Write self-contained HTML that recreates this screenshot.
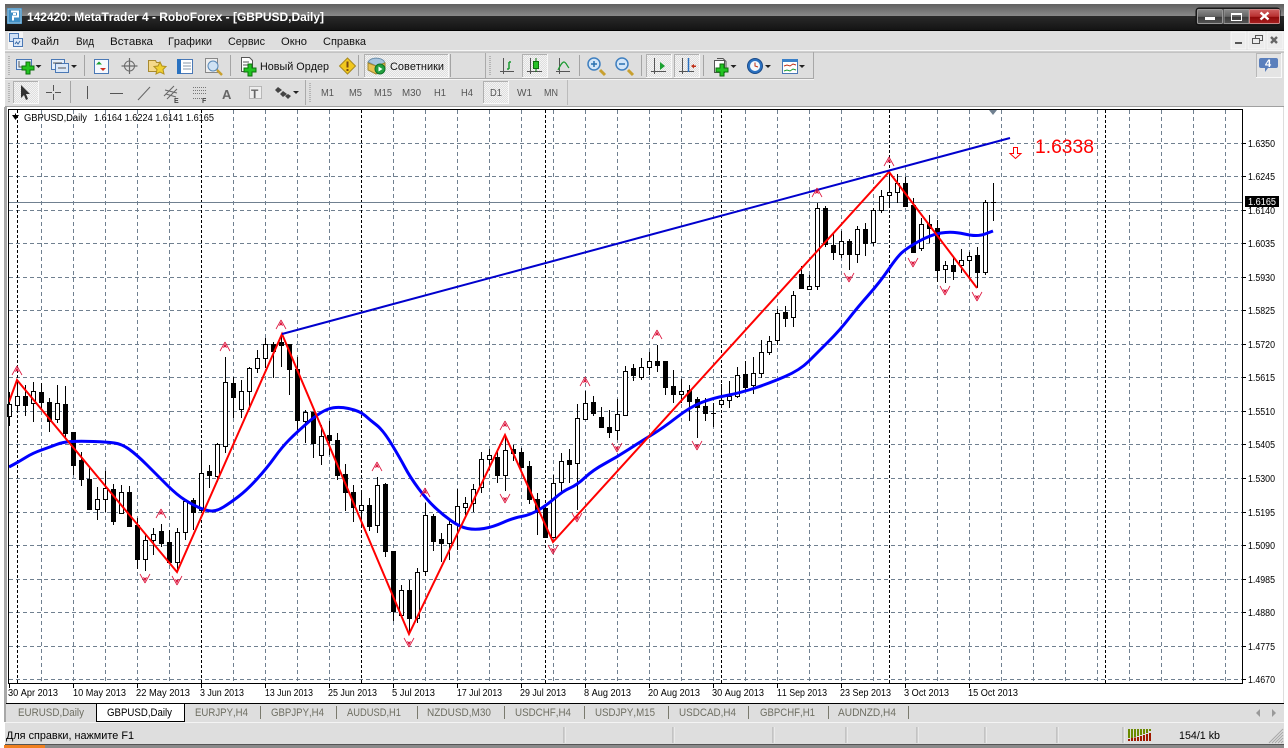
<!DOCTYPE html>
<html lang="ru"><head><meta charset="utf-8"><title>MetaTrader 4</title>
<style>
html,body{margin:0;padding:0;background:#fff;width:1288px;height:748px;overflow:hidden}
svg{display:block;font-family:"Liberation Sans",Arial,sans-serif}
text{font-kerning:none}
.m{font-size:11px;fill:#111}
.t{font-size:10px;fill:#555}
.d{font-size:10px;fill:#000}
.p{font-size:10px;fill:#000}
.b{font-size:11px;fill:#6e6e62}
</style></head><body>
<svg width="1288" height="748" viewBox="0 0 1288 748" xmlns="http://www.w3.org/2000/svg">
<defs>
<linearGradient id="g1" x1="0" y1="0" x2="0" y2="1"><stop offset="0" stop-color="#606060"/><stop offset="1" stop-color="#8a8a8a"/></linearGradient>
<linearGradient id="g2" x1="0" y1="0" x2="0" y2="1"><stop offset="0" stop-color="#2a2a2a"/><stop offset="1" stop-color="#141414"/></linearGradient>
<linearGradient id="gb" x1="0" y1="0" x2="0" y2="1"><stop offset="0" stop-color="#8a8a8a"/><stop offset=".5" stop-color="#666"/><stop offset=".55" stop-color="#3c3c3c"/><stop offset="1" stop-color="#555"/></linearGradient>
<linearGradient id="gr" x1="0" y1="0" x2="0" y2="1"><stop offset="0" stop-color="#d06060"/><stop offset=".5" stop-color="#b83030"/><stop offset=".55" stop-color="#900a0a"/><stop offset="1" stop-color="#a82020"/></linearGradient>
<pattern id="dz" width="2" height="2" patternUnits="userSpaceOnUse"><rect width="2" height="2" fill="#dedede"/><rect width="1" height="1" fill="#f4f4f4"/><rect x="1" y="1" width="1" height="1" fill="#f4f4f4"/></pattern>
<path id="plus" d="M-2-6h4v4h4v4h-4v4h-4v-4h-4v-4h4z" fill="#22c422" stroke="#0c700c"/>
<g id="u" fill="#dc143c"><path d="M0-5L-5 4M0-5L5 4" stroke="#dc143c" stroke-width=".8" fill="none"/><path d="M0-3.500L-2.200 1L0 0L2.200 1z"/></g>
<g id="n" fill="#dc143c"><path d="M0 5L-5-4M0 5L5-4" stroke="#dc143c" stroke-width=".8" fill="none"/><path d="M0 3.500L-2.200-1L0 0L2.200-1z"/></g>
<path id="dr" d="M0 0h6l-3 3z" fill="#222"/>
</defs>

<!-- window chrome -->
<rect x="5" y="4" width="1279" height="12" fill="url(#g1)"/>
<rect x="5" y="16" width="1279" height="14" fill="url(#g2)"/>
<rect x="5" y="30" width="1279" height="1" fill="#000"/>
<rect x="5" y="31" width="1279" height="19" fill="#dedede"/>
<rect x="5" y="50" width="1279" height="2" fill="#f6f6f6"/>
<rect x="5" y="52" width="1279" height="54" fill="#dedede"/>
<rect x="5" y="51.500" width="1279" height="1" fill="#a8a8a8"/>
<path d="M5 78.500H813.500V52" fill="none" stroke="#a8a8a8"/>
<path d="M5 79.500H814" stroke="#f4f4f4"/>
<path d="M567.500 80V105" stroke="#bbb"/>
<path d="M305.500 80V105M485.500 53V78" stroke="#aaa"/>
<rect x="5" y="106" width="1279" height="1" fill="#a0a0a0"/>
<rect x="7" y="107" width="1276" height="596" fill="#fff"/>
<rect x="4" y="107" width="3" height="596" fill="#a8a8a8"/>
<rect x="1283" y="107" width="1" height="596" fill="#ddd"/>

<!-- title -->
<rect x="7" y="8" width="15" height="16" fill="#2c7fb8"/>
<rect x="8" y="9" width="13" height="14" fill="#3f8fc5" stroke="#9cc6e0"/>
<path d="M11 11.500h7v5h-5v4M13 14h3" fill="none" stroke="#fff" stroke-width="2"/>
<text x="27" y="21" font-size="12" font-weight="bold" fill="#fff" textLength="297" lengthAdjust="spacingAndGlyphs">142420: MetaTrader 4 - RoboForex - [GBPUSD,Daily]</text>
<rect x="1196" y="8" width="84" height="17" rx="3" fill="#222" stroke="#111"/>
<rect x="1197.500" y="9.500" width="25" height="14" rx="1" fill="url(#gb)" stroke="#999"/>
<rect x="1224" y="9.500" width="25" height="14" fill="url(#gb)" stroke="#999"/>
<rect x="1249.500" y="9.500" width="30" height="14" rx="1" fill="url(#gr)" stroke="#c88"/>
<rect x="1205" y="17" width="10" height="3" fill="#fff"/>
<rect x="1231.500" y="13.500" width="10" height="7" fill="none" stroke="#fff"/><rect x="1231" y="13" width="11" height="2" fill="#fff"/>
<path d="M1260.500 12.500l8 7M1268.500 12.500l-8 7" stroke="#fff" stroke-width="2.400"/>

<!-- menu -->
<rect x="8" y="32" width="15" height="17" fill="#f4f4f4"/>
<rect x="9.500" y="33.500" width="9" height="8" fill="#cfe0f5" stroke="#4a78b5"/>
<rect x="13.500" y="38.500" width="9" height="8" fill="#dde9f8" stroke="#4a78b5"/>
<path d="M15 44l1.500-2 1.500 2 2-3" stroke="#3a6aa5" fill="none"/>
<text class="m" x="31" y="45" textLength="28" lengthAdjust="spacingAndGlyphs">Файл</text>
<text class="m" x="76" y="45" textLength="18" lengthAdjust="spacingAndGlyphs">Вид</text>
<text class="m" x="110" y="45" textLength="43" lengthAdjust="spacingAndGlyphs">Вставка</text>
<text class="m" x="168" y="45" textLength="44" lengthAdjust="spacingAndGlyphs">Графики</text>
<text class="m" x="228" y="45" textLength="37" lengthAdjust="spacingAndGlyphs">Сервис</text>
<text class="m" x="281" y="45" textLength="26" lengthAdjust="spacingAndGlyphs">Окно</text>
<text class="m" x="323" y="45" textLength="43" lengthAdjust="spacingAndGlyphs">Справка</text>
<rect x="1231" y="32" width="15" height="17" fill="#ececec" stroke="#f8f8f8"/>
<rect x="1248" y="32" width="17" height="17" fill="#ececec" stroke="#f8f8f8"/>
<rect x="1267" y="32" width="16" height="17" fill="#ececec" stroke="#f8f8f8"/>
<rect x="1235" y="42" width="7" height="2" fill="#555"/>
<path d="M1252.500 38.500h7v5h-7zM1255.500 38v-2.500h7v5h-3" fill="none" stroke="#555"/><path d="M1252 38.500h8M1255 35.500h8" stroke="#555"/>
<path d="M1271 37l6 6M1277 37l-6 6" stroke="#666" stroke-width="2.400"/>

<!-- toolbar 1 -->
<path d="M8.500 56V76M9.500 56V76M489.500 56V76M490.500 56V76" stroke="#b4b4b4" stroke-dasharray="1 1"/>
<g><rect x="16.500" y="59.500" width="15" height="10" fill="#e4eefa" stroke="#4a78b5"/><path d="M19 61v6h8" stroke="#555" fill="none"/><use href="#plus" x="28" y="68"/><use href="#dr" x="35.500" y="65"/></g>
<g><rect x="51.500" y="59.500" width="13" height="10" fill="#e4eefa" stroke="#4a78b5"/><rect x="55.500" y="63.500" width="13" height="9" fill="#dbe8f8" stroke="#4a78b5"/><path d="M53 63h9M58 68h8" stroke="#555"/><use href="#dr" x="71" y="65"/></g>
<path d="M84.500 55V76M230.500 55V76M358.500 55V76M450.500 54V77M579.500 55V76M641.500 55V76M703.500 55V76" stroke="#a4a4a4"/>
<g><rect x="94.500" y="59.500" width="14" height="14" fill="#f6f9fe" stroke="#4a78b5"/><path d="M103 71l3-3h-6z" fill="#d03020"/><path d="M99 61.500l3 3h-6z" fill="#1aa030"/></g>
<g fill="none" stroke="#6a6a6a"><circle cx="129.500" cy="66" r="5"/><path d="M129.500 58v16M121.500 66h16" stroke-width="1.200"/></g>
<g><path d="M148.500 60.500h7l1 2h3v9h-11z" fill="#f4d98a" stroke="#a88a30"/><path d="M160 62l2 4 4 .5-3 3 1 4.500-4-2-4 2 1-4.500-3-3 4-.5z" fill="#f0d030" stroke="#b09020"/></g>
<g><rect x="177.500" y="59.500" width="15" height="14" fill="#fff" stroke="#4a78b5"/><rect x="177" y="59" width="4" height="15" fill="#2a72c0"/><path d="M183 63h8M183 66h8M183 69h8" stroke="#89a"/></g>
<g><rect x="205.500" y="58.500" width="12" height="14" fill="#eee" stroke="#888"/><circle cx="213" cy="66" r="5" fill="#cfe2f4" stroke="#5a8ab8"/><path d="M217 70l5 5" stroke="#c8a030" stroke-width="2.500"/></g>
<g><path d="M241.500 57.500h8l3 3v11h-11z" fill="#fff" stroke="#555"/><path d="M243 62h6M243 65h7" stroke="#555"/><use href="#plus" x="250" y="70"/></g>
<text class="m" x="260" y="70" textLength="69" lengthAdjust="spacingAndGlyphs">Новый Ордер</text>
<g><path d="M347.500 58l8 8-8 8-8-8z" fill="#f2c81e" stroke="#a88a20"/><path d="M347.500 61.500v6" stroke="#7a4a10" stroke-width="2"/><rect x="346.500" y="69" width="2" height="2" fill="#7a4a10"/></g>
<rect x="364.500" y="54.500" width="84" height="23" fill="url(#dz)" stroke="#f8f8f8"/><path d="M364.500 77V54.500H448" fill="none" stroke="#b0b0b0"/>
<g><path d="M368 62c3-5 12-5 16-1l1 3-9 2z" fill="#a8c4de" stroke="#6a8ca8"/><path d="M368 63l8 3 9-3v6l-9 5-8-4z" fill="#e8c050" stroke="#a08830"/><circle cx="380" cy="69" r="5" fill="#22a040" stroke="#0f7028"/><path d="M378.500 66.500v5l4-2.500z" fill="#fff"/></g>
<text class="m" x="390" y="70" textLength="54" lengthAdjust="spacingAndGlyphs">Советники</text>
<g fill="none" stroke="#555"><path d="M503.500 58v16M500 71.500h14"/><path d="M509 62v7M509 62h2M507 69h2" stroke="#1a9a30" stroke-width="1.500"/></g>
<rect x="522.500" y="54.500" width="25" height="23" fill="url(#dz)" stroke="#f8f8f8"/><path d="M522.500 77V54.500H547" fill="none" stroke="#b0b0b0"/>
<g fill="none" stroke="#555"><path d="M530.500 58v16M527 71.500h15"/><rect x="533.500" y="61.500" width="5" height="7" fill="#26c026" stroke="#0c700c"/><path d="M536 58v3M536 69v3" stroke="#0c700c"/></g>
<g fill="none" stroke="#555"><path d="M559.500 58v16M556 71.500h14"/><path d="M558 70c2-4 4-8 6-8s3 4 5 6" stroke="#1a9a30" stroke-width="1.200"/></g>
<g><path d="M600 70l5 5" stroke="#c8a030" stroke-width="3"/><circle cx="594" cy="64" r="6" fill="#d4e6f8" stroke="#4080c0" stroke-width="1.500"/><path d="M591 64h6M594 61v6" stroke="#2a70b0" stroke-width="1.500"/></g>
<g><path d="M628 70l5 5" stroke="#c8a030" stroke-width="3"/><circle cx="622" cy="64" r="6" fill="#d4e6f8" stroke="#4080c0" stroke-width="1.500"/><path d="M619 64h6" stroke="#2a70b0" stroke-width="1.500"/></g>
<rect x="646.500" y="54.500" width="25" height="23" fill="url(#dz)" stroke="#f8f8f8"/><path d="M646.500 77V54.500H671" fill="none" stroke="#b0b0b0"/>
<g fill="none" stroke="#555"><path d="M654.500 58v16M651 71.500h15"/><path d="M660 62v8l5-4z" fill="#1aa030" stroke="none"/></g>
<rect x="674.500" y="54.500" width="25" height="23" fill="url(#dz)" stroke="#f8f8f8"/><path d="M674.500 77V54.500H699" fill="none" stroke="#b0b0b0"/>
<g fill="none" stroke="#555"><path d="M682.500 58v16M679 71.500h15"/><path d="M688.500 58v14" stroke="#2a70c0" stroke-width="1.500"/><path d="M691 66l3-2v1.500h2v1.500h-2v1.500z" fill="#c03018" stroke="none"/></g>
<g><rect x="714.500" y="60.500" width="10" height="12" fill="#fff" stroke="#555"/><path d="M717 58.500h6l3 3v6" fill="none" stroke="#555"/><use href="#plus" x="722" y="70"/><use href="#dr" x="730.500" y="65"/></g>
<g><circle cx="755" cy="66" r="7.500" fill="#2a70c0" stroke="#1a4a88"/><circle cx="755" cy="66" r="5" fill="#f4f8fc"/><path d="M755 62.500v3.500l3 1" stroke="#c03018" fill="none"/><use href="#dr" x="765" y="65"/></g>
<g><rect x="782.500" y="59.500" width="15" height="14" fill="#fff" stroke="#4a78b5"/><rect x="782" y="59" width="16" height="3" fill="#3a80c8"/><path d="M784 66l3-1 3 1 3-2 3 1" stroke="#c03018" fill="none"/><path d="M784 71l3-1 3 1 3-2 3 1" stroke="#1a9a30" fill="none"/><use href="#dr" x="799" y="65"/></g>
<rect x="1256.500" y="53.500" width="25" height="24" fill="#e4e4e4" stroke="#f8f8f8"/><path d="M1256.500 77V53.500H1281" fill="none" stroke="#b8b8b8"/>
<path d="M1261 58h15q2 0 2 2v6q0 2-2 2h-8l-3 4v-4h-4q-2 0-2-2v-6q0-2 2-2z" fill="#5a7fbc"/>
<text x="1265" y="67" font-size="11" font-weight="bold" fill="#fff">4</text>

<!-- toolbar 2 -->
<path d="M8.500 83V103M9.500 83V103M309.500 83V103M310.500 83V103" stroke="#b4b4b4" stroke-dasharray="1 1"/>
<rect x="13.500" y="81.500" width="25" height="22" fill="url(#dz)" stroke="#f8f8f8"/><path d="M13.500 103V81.500H38" fill="none" stroke="#b0b0b0"/>
<path d="M21 85v13l3-3 2 5 2-1-2-5h4z" fill="#333"/>
<path d="M53.500 85v6M53.500 94v6M46 92.500h6M55 92.500h6" stroke="#555"/>
<path d="M70.500 81V103" stroke="#a4a4a4"/>
<path d="M87.500 86v13" stroke="#555"/>
<path d="M110 93.500h13" stroke="#555"/>
<path d="M138 100l12-13" stroke="#666"/>
<g stroke="#666" fill="none"><path d="M164 96l10-10M167 99l10-10M165 90l12 3M166 94l10 3"/></g><text x="174" y="103" font-size="7" font-weight="bold" fill="#444">E</text>
<g stroke="#777" stroke-dasharray="1 1"><path d="M193 87.500h14M193 90.500h14M193 93.500h14M193 98.500h14"/></g><text x="202" y="103" font-size="7" font-weight="bold" fill="#444">F</text>
<text x="222" y="99" font-size="13" font-weight="bold" fill="#666">A</text>
<rect x="249.500" y="86.500" width="12" height="12" fill="#eee" stroke="#888" stroke-dasharray="1 1"/><text x="251" y="98" font-size="12" font-weight="bold" fill="#666">T</text>
<path d="M278 87l4 3-4 3-3-3zM283 91l4 3-4 3-3-3zM288 94l3 2-3 3-3-3z" fill="#444"/><use href="#dr" x="293" y="91"/>
<text class="t" x="321" y="96" textLength="13" lengthAdjust="spacingAndGlyphs">M1</text>
<text class="t" x="349" y="96" textLength="13" lengthAdjust="spacingAndGlyphs">M5</text>
<text class="t" x="374" y="96" textLength="18" lengthAdjust="spacingAndGlyphs">M15</text>
<text class="t" x="402" y="96" textLength="19" lengthAdjust="spacingAndGlyphs">M30</text>
<text class="t" x="434" y="96" textLength="12" lengthAdjust="spacingAndGlyphs">H1</text>
<text class="t" x="461" y="96" textLength="12" lengthAdjust="spacingAndGlyphs">H4</text>
<rect x="483.500" y="81.500" width="25" height="22" fill="url(#dz)" stroke="#f8f8f8"/><path d="M483.500 103V81.500H508" fill="none" stroke="#b0b0b0"/>
<text class="t" x="490" y="96" textLength="12" lengthAdjust="spacingAndGlyphs">D1</text>
<text class="t" x="517" y="96" textLength="15" lengthAdjust="spacingAndGlyphs">W1</text>
<text class="t" x="544" y="96" textLength="14" lengthAdjust="spacingAndGlyphs">MN</text>

<!-- chart grid -->
<g fill="none" stroke="#708090" stroke-dasharray="4 3">
<path d="M41.500 110V683M73.500 110V683M105.500 110V683M137.500 110V683M169.500 110V683M233.500 110V683M265.500 110V683M297.500 110V683M329.500 110V683M393.500 110V683M425.500 110V683M457.500 110V683M489.500 110V683M521.500 110V683M553.500 110V683M585.500 110V683M617.500 110V683M649.500 110V683M681.500 110V683M713.500 110V683M745.500 110V683M777.500 110V683M809.500 110V683M841.500 110V683M873.500 110V683M905.500 110V683M937.500 110V683M969.500 110V683M1001.500 110V683M1033.500 110V683M1065.500 110V683M1097.500 110V683M1129.500 110V683M1161.500 110V683M1193.500 110V683M1225.500 110V683"/>
<path d="M9 143.500H1243M9 176.500H1243M9 210.500H1243M9 243.500H1243M9 277.500H1243M9 310.500H1243M9 344.500H1243M9 377.500H1243M9 411.500H1243M9 444.500H1243M9 478.500H1243M9 512.500H1243M9 545.500H1243M9 579.500H1243M9 612.500H1243M9 646.500H1243M9 679.500H1243"/>
</g>
<path d="M17.500 110V683M201.500 110V683M361.500 110V683M545.500 110V683M721.500 110V683M889.500 110V683M1105.500 110V683" stroke="#000" stroke-dasharray="3 2" fill="none"/>
<path d="M9 202.500H1243" stroke="#708090"/>

<!-- candles -->
<g shape-rendering="crispEdges" stroke="#000">
<path fill="none" d="M9.500 392V426M17.500 380V411M25.500 385V416M33.500 382V422M41.500 383V410M49.500 398V432M57.500 385V423M65.500 386V437M73.500 432V475M81.500 452V486M89.500 468V509M97.500 487V520M105.500 471V512M113.500 484V525M121.500 485V514M129.500 486V527M137.500 518V569M145.500 535V571M153.500 528V555M161.500 524V547M169.500 530V562M177.500 528V572M185.500 500V540M193.500 498V530M201.500 452V510M209.500 465V488M217.500 443V482M225.500 357V453M233.500 377V418M241.500 380V418M249.500 367V410M257.500 350V373M265.500 338V368M273.500 342V378M281.500 334V367M289.500 344V395M297.500 357V430M305.500 410V443M313.500 412V458M321.500 425V465M329.500 421V455M337.500 433V480M345.500 464V511M353.500 485V522M361.500 493V527M369.500 498V531M377.500 477V533M385.500 483V557M393.500 551V621M401.500 585V615M409.500 580V632M417.500 568V623M425.500 503V576M433.500 514V551M441.500 533V562M449.500 518V560M457.500 489V550M465.500 497V515M473.500 484V512M481.500 452V493M489.500 449V470M497.500 452V483M505.500 437V491M513.500 445V461M521.500 448V467M529.500 461V504M537.500 493V535M545.500 508V537M553.500 475V538M561.500 453V493M569.500 449V483M577.500 404V510M585.500 391V420M593.500 396V416M601.500 407V428M609.500 410V438M617.500 399V440M625.500 366V416M633.500 364V381M641.500 358V380M649.500 352V375M657.500 345V372M665.500 361V395M673.500 370V403M681.500 379V403M689.500 385V421M697.500 397V438M705.500 398V421M713.500 403V427M721.500 384V407M729.500 381V408M737.500 367V398M745.500 361V392M753.500 357V394M761.500 340V378M769.500 336V355M777.500 309V345M785.500 306V327M793.500 291V327M801.500 266V288M809.500 275V290M817.500 203V290M825.500 206V247M833.500 233V260M841.500 231V258M849.500 239V270M857.500 226V263M865.500 223V256M873.500 208V246M881.500 190V213M889.500 172V205M897.500 174V203M905.500 177V206M913.500 198V252M921.500 218V251M929.500 215V243M937.500 220V282M945.500 261V283M953.500 257V280M961.500 249V273M969.500 252V278M977.500 247V288M985.500 200V275M993.500 183V221M711 413.500H716M991 202.500H996"/>
<path fill="#fff" d="M7.500 404.500h4v12h-4zM15.500 396.500h4v9h-4zM31.500 391.500h4v12h-4zM55.500 403.500h4v16h-4zM95.500 499.500h4v10h-4zM103.500 488.500h4v11h-4zM119.500 492.500h4v21h-4zM143.500 540.500h4v19h-4zM151.500 534.500h4v6h-4zM175.500 532.500h4v30h-4zM183.500 501.500h4v31h-4zM199.500 473.500h4v37h-4zM215.500 444.500h4v32h-4zM223.500 382.500h4v64h-4zM239.500 391.500h4v18h-4zM247.500 368.500h4v23h-4zM255.500 358.500h4v10h-4zM263.500 344.500h4v14h-4zM303.500 412.500h4v9h-4zM319.500 436.500h4v19h-4zM359.500 505.500h4v5h-4zM375.500 485.500h4v40h-4zM399.500 590.500h4v25h-4zM415.500 572.500h4v46h-4zM423.500 515.500h4v56h-4zM447.500 524.500h4v19h-4zM455.500 506.500h4v18h-4zM463.500 503.500h4v4h-4zM471.500 489.500h4v14h-4zM479.500 459.500h4v28h-4zM487.500 455.500h4v4h-4zM503.500 450.500h4v25h-4zM551.500 483.500h4v54h-4zM559.500 461.500h4v21h-4zM575.500 418.500h4v45h-4zM583.500 403.500h4v16h-4zM615.500 414.500h4v16h-4zM623.500 371.500h4v44h-4zM639.500 367.500h4v10h-4zM647.500 361.500h4v6h-4zM679.500 391.500h4v3h-4zM719.500 400.500h4v4h-4zM727.500 396.500h4v4h-4zM735.500 375.500h4v21h-4zM751.500 373.500h4v12h-4zM759.500 352.500h4v21h-4zM767.500 341.500h4v11h-4zM775.500 313.500h4v27h-4zM791.500 295.500h4v22h-4zM807.500 286.500h4v3h-4zM815.500 208.500h4v78h-4zM839.500 241.500h4v13h-4zM855.500 229.500h4v25h-4zM871.500 210.500h4v32h-4zM879.500 196.500h4v14h-4zM887.500 192.500h4v3h-4zM895.500 183.500h4v9h-4zM919.500 224.500h4v24h-4zM943.500 265.500h4v4h-4zM959.500 260.500h4v5h-4zM967.500 256.500h4v4h-4zM983.500 202.500h4v70h-4z"/>
<path fill="#000" d="M23.500 396.500h4v9h-4zM39.500 392.500h4v10h-4zM47.500 402.500h4v19h-4zM63.500 404.500h4v29h-4zM71.500 432.500h4v33h-4zM79.500 460.500h4v19h-4zM87.500 479.500h4v30h-4zM111.500 489.500h4v32h-4zM127.500 492.500h4v34h-4zM135.500 525.500h4v34h-4zM159.500 531.500h4v12h-4zM167.500 542.500h4v20h-4zM191.500 500.500h4v12h-4zM207.500 471.500h4v4h-4zM231.500 383.500h4v14h-4zM271.500 344.500h4v7h-4zM279.500 342.500h4v3h-4zM287.500 344.500h4v25h-4zM295.500 369.500h4v51h-4zM311.500 412.500h4v31h-4zM327.500 435.500h4v5h-4zM335.500 440.500h4v35h-4zM343.500 474.500h4v18h-4zM351.500 492.500h4v15h-4zM367.500 505.500h4v21h-4zM383.500 484.500h4v67h-4zM391.500 551.500h4v60h-4zM407.500 590.500h4v28h-4zM431.500 516.500h4v25h-4zM439.500 539.500h4v4h-4zM495.500 457.500h4v18h-4zM511.500 449.500h4v4h-4zM519.500 452.500h4v15h-4zM527.500 466.500h4v33h-4zM535.500 499.500h4v13h-4zM543.500 508.500h4v29h-4zM567.500 460.500h4v4h-4zM591.500 402.500h4v11h-4zM599.500 417.500h4v10h-4zM607.500 427.500h4v5h-4zM631.500 368.500h4v7h-4zM655.500 361.500h4v4h-4zM663.500 361.500h4v26h-4zM671.500 386.500h4v8h-4zM687.500 390.500h4v11h-4zM695.500 399.500h4v8h-4zM703.500 406.500h4v7h-4zM743.500 374.500h4v13h-4zM783.500 312.500h4v6h-4zM799.500 274.500h4v14h-4zM823.500 208.500h4v36h-4zM831.500 245.500h4v7h-4zM847.500 241.500h4v13h-4zM863.500 229.500h4v14h-4zM903.500 183.500h4v23h-4zM911.500 205.500h4v47h-4zM927.500 224.500h4v4h-4zM935.500 228.500h4v42h-4zM951.500 265.500h4v6h-4zM975.500 255.500h4v17h-4z"/>
</g>

<!-- indicators -->
<path fill="none" stroke="#0000ff" stroke-width="3" stroke-linejoin="round" d="M9 467L14.500 464Q20 461 26.500 457Q33 453 41.500 450Q50 447 56.500 444.500Q63 442 71.500 441.500Q80 441 93.500 441.500Q107 442 114.500 443Q122 444 129.500 449.500Q137 455 147 465Q157 475 167 485Q177 495 185 500Q193 505 200 508Q207 511 212 511Q217 511 223.500 507Q230 503 238.500 496.500Q247 490 257 479Q267 468 274.500 457.500Q282 447 289.500 439.500Q297 432 308.500 422Q320 412 328.500 409Q337 406 348.500 408.500Q360 411 365 415.500Q370 420 376.500 425Q383 430 391.500 444Q400 458 405 467.500Q410 477 418.500 488.500Q427 500 435 507.500Q443 515 451.500 521Q460 527 467.500 528.500Q475 530 484 528.500Q493 527 503 522.500Q513 518 521.500 516.500Q530 515 538.500 510Q547 505 555 498Q563 491 570 488Q577 485 585 477.500Q593 470 605 463.500Q617 457 628.500 449.500Q640 442 651.500 435Q663 428 676.500 417.500Q690 407 701.500 402.500Q713 398 726.500 395.500Q740 393 755 388Q770 383 785 376.500Q800 370 808.500 361.500Q817 353 828.500 341.500Q840 330 848.500 319Q857 308 868.500 295Q880 282 888.500 269.500Q897 257 902 252.500Q907 248 918.500 241.500Q930 235 941 233Q952 231 964.500 234Q977 237 985 234L993 231"/>
<path fill="none" stroke="#ff0000" stroke-width="2" d="M9 402L17 380L177 572L282 334L409 634L505 435L553 542L889 172L977 288"/>
<path fill="none" stroke="#0000cd" stroke-width="2" d="M282 334L1010 138"/>
<g>
<use href="#u" x="17" y="371"/><use href="#u" x="161" y="514"/><use href="#u" x="225" y="347"/><use href="#u" x="281" y="325"/><use href="#u" x="377" y="467"/><use href="#u" x="425" y="493"/><use href="#u" x="505" y="426"/><use href="#u" x="585" y="382"/><use href="#u" x="657" y="335"/><use href="#u" x="817" y="193"/><use href="#u" x="889" y="162"/>
<use href="#n" x="145" y="578"/><use href="#n" x="177" y="580"/><use href="#n" x="409" y="642"/><use href="#n" x="505" y="498"/><use href="#n" x="553" y="549"/><use href="#n" x="577" y="517"/><use href="#n" x="617" y="447"/><use href="#n" x="697" y="445"/><use href="#n" x="849" y="277"/><use href="#n" x="913" y="262"/><use href="#n" x="945" y="290"/><use href="#n" x="977" y="296"/>
</g>
<path d="M1013.500 147.500h4v6h3.500l-5.500 5-5.500-5h3.500z" fill="#fff" stroke="#ff0000"/>
<text x="1035" y="153" font-size="19" fill="#ff0000" textLength="59" lengthAdjust="spacingAndGlyphs">1.6338</text>
<path d="M989 110h8l-4 5z" fill="#708090"/>

<!-- frame -->
<rect x="8.500" y="109.500" width="1234" height="574" fill="none" stroke="#000"/>
<path d="M12 115h7l-3.500 5z" fill="#000"/><rect x="15" y="113.500" width="1" height="2" fill="#000"/>
<text class="p" x="24" y="121" textLength="63" lengthAdjust="spacingAndGlyphs">GBPUSD,Daily</text>
<text class="p" x="94" y="121" textLength="120" lengthAdjust="spacingAndGlyphs">1.6164 1.6224 1.6141 1.6165</text>

<!-- price axis -->
<path d="M1243 143.500h3M1243 176.500h3M1243 210.500h3M1243 243.500h3M1243 277.500h3M1243 310.500h3M1243 344.500h3M1243 377.500h3M1243 411.500h3M1243 444.500h3M1243 478.500h3M1243 512.500h3M1243 545.500h3M1243 579.500h3M1243 612.500h3M1243 646.500h3M1243 679.500h3" stroke="#000"/>
<text class="p" x="1248" y="147" textLength="27" lengthAdjust="spacingAndGlyphs">1.6350</text>
<text class="p" x="1248" y="180" textLength="27" lengthAdjust="spacingAndGlyphs">1.6245</text>
<text class="p" x="1248" y="214" textLength="27" lengthAdjust="spacingAndGlyphs">1.6140</text>
<text class="p" x="1248" y="247" textLength="27" lengthAdjust="spacingAndGlyphs">1.6035</text>
<text class="p" x="1248" y="281" textLength="27" lengthAdjust="spacingAndGlyphs">1.5930</text>
<text class="p" x="1248" y="314" textLength="27" lengthAdjust="spacingAndGlyphs">1.5825</text>
<text class="p" x="1248" y="348" textLength="27" lengthAdjust="spacingAndGlyphs">1.5720</text>
<text class="p" x="1248" y="381" textLength="27" lengthAdjust="spacingAndGlyphs">1.5615</text>
<text class="p" x="1248" y="415" textLength="27" lengthAdjust="spacingAndGlyphs">1.5510</text>
<text class="p" x="1248" y="448" textLength="27" lengthAdjust="spacingAndGlyphs">1.5405</text>
<text class="p" x="1248" y="482" textLength="27" lengthAdjust="spacingAndGlyphs">1.5300</text>
<text class="p" x="1248" y="516" textLength="27" lengthAdjust="spacingAndGlyphs">1.5195</text>
<text class="p" x="1248" y="549" textLength="27" lengthAdjust="spacingAndGlyphs">1.5090</text>
<text class="p" x="1248" y="583" textLength="27" lengthAdjust="spacingAndGlyphs">1.4985</text>
<text class="p" x="1248" y="616" textLength="27" lengthAdjust="spacingAndGlyphs">1.4880</text>
<text class="p" x="1248" y="650" textLength="27" lengthAdjust="spacingAndGlyphs">1.4775</text>
<text class="p" x="1248" y="683" textLength="27" lengthAdjust="spacingAndGlyphs">1.4670</text>
<rect x="1245" y="196" width="34" height="11" fill="#000"/>
<text x="1248" y="205" font-size="10" fill="#fff" textLength="28" lengthAdjust="spacingAndGlyphs">1.6165</text>

<!-- time axis -->
<path d="M9.500 684v4M73.500 684v4M137.500 684v4M201.500 684v4M265.500 684v4M329.500 684v4M393.500 684v4M457.500 684v4M521.500 684v4M585.500 684v4M649.500 684v4M713.500 684v4M777.500 684v4M841.500 684v4M905.500 684v4M969.500 684v4" stroke="#000"/>
<text class="d" x="8" y="696" textLength="50" lengthAdjust="spacingAndGlyphs">30 Apr 2013</text>
<text class="d" x="73" y="696" textLength="53" lengthAdjust="spacingAndGlyphs">10 May 2013</text>
<text class="d" x="136" y="696" textLength="54" lengthAdjust="spacingAndGlyphs">22 May 2013</text>
<text class="d" x="200" y="696" textLength="44" lengthAdjust="spacingAndGlyphs">3 Jun 2013</text>
<text class="d" x="265" y="696" textLength="48" lengthAdjust="spacingAndGlyphs">13 Jun 2013</text>
<text class="d" x="328" y="696" textLength="49" lengthAdjust="spacingAndGlyphs">25 Jun 2013</text>
<text class="d" x="392" y="696" textLength="43" lengthAdjust="spacingAndGlyphs">5 Jul 2013</text>
<text class="d" x="457" y="696" textLength="45" lengthAdjust="spacingAndGlyphs">17 Jul 2013</text>
<text class="d" x="520" y="696" textLength="46" lengthAdjust="spacingAndGlyphs">29 Jul 2013</text>
<text class="d" x="584" y="696" textLength="47" lengthAdjust="spacingAndGlyphs">8 Aug 2013</text>
<text class="d" x="648" y="696" textLength="52" lengthAdjust="spacingAndGlyphs">20 Aug 2013</text>
<text class="d" x="712" y="696" textLength="52" lengthAdjust="spacingAndGlyphs">30 Aug 2013</text>
<text class="d" x="777" y="696" textLength="50" lengthAdjust="spacingAndGlyphs">11 Sep 2013</text>
<text class="d" x="840" y="696" textLength="51" lengthAdjust="spacingAndGlyphs">23 Sep 2013</text>
<text class="d" x="904" y="696" textLength="45" lengthAdjust="spacingAndGlyphs">3 Oct 2013</text>
<text class="d" x="968" y="696" textLength="50" lengthAdjust="spacingAndGlyphs">15 Oct 2013</text>

<!-- tabs -->
<rect x="5" y="703" width="1279" height="19" fill="#dedede"/>
<rect x="5" y="703" width="1279" height="1" fill="#000"/>
<rect x="5" y="722" width="1279" height="1" fill="#f4f4f4"/>
<rect x="4" y="703" width="2" height="19" fill="#a8a8a8"/>
<path d="M96.500 704V721.500H184.500V704" fill="#fff" stroke="#000"/>
<path d="M260.500 706v13M336.500 706v13M417.500 706v13M504.500 706v13M584.500 706v13M668.500 706v13M748.500 706v13M828.500 706v13M908.500 706v13" stroke="#7a7a6e"/>
<text class="b" x="18" y="716" textLength="66" lengthAdjust="spacingAndGlyphs">EURUSD,Daily</text>
<text x="107" y="716" font-size="11" fill="#000" textLength="65" lengthAdjust="spacingAndGlyphs">GBPUSD,Daily</text>
<text class="b" x="195" y="716" textLength="53" lengthAdjust="spacingAndGlyphs">EURJPY,H4</text>
<text class="b" x="271" y="716" textLength="53" lengthAdjust="spacingAndGlyphs">GBPJPY,H4</text>
<text class="b" x="347" y="716" textLength="54" lengthAdjust="spacingAndGlyphs">AUDUSD,H1</text>
<text class="b" x="427" y="716" textLength="64" lengthAdjust="spacingAndGlyphs">NZDUSD,M30</text>
<text class="b" x="515" y="716" textLength="56" lengthAdjust="spacingAndGlyphs">USDCHF,H4</text>
<text class="b" x="595" y="716" textLength="60" lengthAdjust="spacingAndGlyphs">USDJPY,M15</text>
<text class="b" x="679" y="716" textLength="57" lengthAdjust="spacingAndGlyphs">USDCAD,H4</text>
<text class="b" x="760" y="716" textLength="55" lengthAdjust="spacingAndGlyphs">GBPCHF,H1</text>
<text class="b" x="838" y="716" textLength="58" lengthAdjust="spacingAndGlyphs">AUDNZD,H4</text>
<path d="M1260 709v8l-4-4zM1272 709v8l4-4z" fill="#999"/>

<!-- status -->
<rect x="5" y="723" width="1279" height="21" fill="#dedede"/>
<text x="6" y="739" font-size="11" fill="#000" textLength="128" lengthAdjust="spacingAndGlyphs">Для справки, нажмите F1</text>
<path d="M564 727v16M673 727v16M773 727v16M846 727v16M917 727v16M985 727v16M1057 727v16M1123 727v16" stroke="#a8a8a8"/>
<path d="M565 727v16M674 727v16M774 727v16M847 727v16M918 727v16M986 727v16M1058 727v16M1124 727v16" stroke="#f6f6f6"/>
<path d="M1129 729v9M1132 729v9M1135 729v8M1138 729v7M1141 729v6M1144 729v5M1147 729v4M1150 729v2" stroke="#6a8a00" stroke-width="2"/>
<path d="M1129 739v2M1132 738v3M1135 737.500v3.500M1138 737v4M1141 736v5M1144 735v6M1147 734v7M1150 733v8" stroke="#a01800" stroke-width="2"/>
<text x="1179" y="739" font-size="11" fill="#000" textLength="41" lengthAdjust="spacingAndGlyphs">154/1 kb</text>
<path d="M1269 743l14-14M1272 743l11-11M1275 743l8-8M1278 743l5-5M1281 743l2-2" stroke="#a8a8a8" fill="none"/>
<rect x="5" y="744" width="1279" height="1" fill="#555"/>
<rect x="5" y="745" width="1279" height="3" fill="#8a8a8a"/>
<rect x="4" y="745" width="41" height="3" fill="#f08020"/>
</svg>
</body></html>
